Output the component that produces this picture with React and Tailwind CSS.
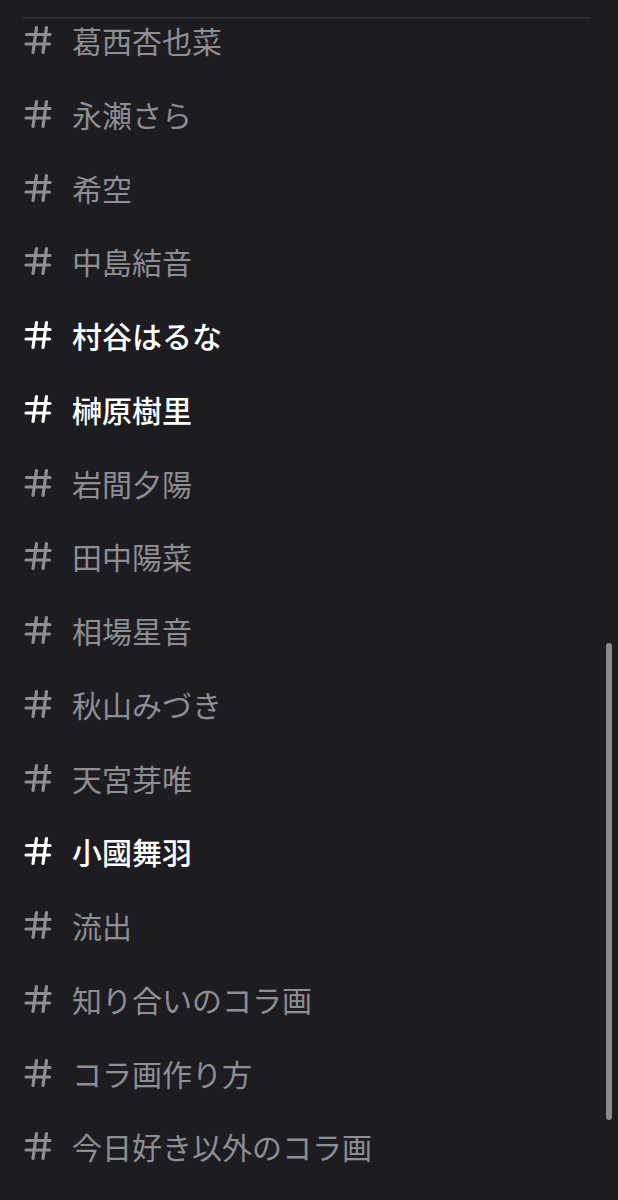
import React from "react";

const channels = [
  { name: "葛西杏也菜" },
  { name: "永瀬さら" },
  { name: "希空" },
  { name: "中島結音" },
  { name: "村谷はるな", unread: true },
  { name: "榊原樹里", unread: true },
  { name: "岩間夕陽" },
  { name: "田中陽菜" },
  { name: "相場星音" },
  { name: "秋山みづき" },
  { name: "天宮芽唯" },
  { name: "小國舞羽", unread: true },
  { name: "流出" },
  { name: "知り合いのコラ画" },
  { name: "コラ画作り方" },
  { name: "今日好き以外のコラ画" },
];

// slanted channel hash
const HashIcon = ({ className }) => (
  <svg
    viewBox="0 0 28 30"
    className={className}
    fill="none"
    stroke="currentColor"
    strokeWidth="3.2"
    strokeLinecap="round"
  >
    <path d="M2.5 9.5h23.5M2 19h23.5M12.5 2.5 9 27.5M22.5 2.5 19 27.5" />
  </svg>
);

const ChannelRow = ({ channel }) => (
  <div
    className={
      channel.unread
        ? "flex items-center h-[44px] text-white font-medium"
        : "flex items-center h-[44px] text-[#8e8e93]"
    }
  >
    <HashIcon className="w-[28px] h-[30px] shrink-0" />
    <span className="ml-[20px] text-[30px] leading-[44px] whitespace-nowrap">
      {channel.name}
    </span>
  </div>
);

const App = () => {
  return (
    <div
      className="relative w-[618px] h-[1200px] overflow-hidden bg-[#1c1c21]"
      style={{ fontFamily: '"Noto Sans CJK JP", "Noto Sans", sans-serif' }}
    >
      <div className="ml-[22px] mr-[27px] mt-[17px] h-[2px] rounded-full bg-[#2c2c31]" />
      <div className="flex flex-col gap-[29.75px] pl-[24px] -mt-[1px]">
        {channels.map((c) => (
          <ChannelRow key={c.name} channel={c} />
        ))}
      </div>
      {/* scroll indicator */}
      <div className="absolute left-[606px] top-[643px] w-[6px] h-[477px] rounded-full bg-[#8a8a8e]" />
    </div>
  );
};

export default App;
